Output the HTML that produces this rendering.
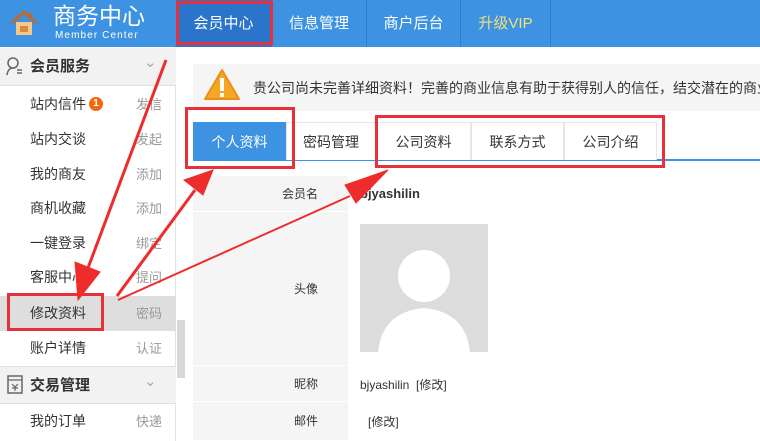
<!DOCTYPE html><html><head><meta charset="utf-8"><style>
*{margin:0;padding:0;box-sizing:border-box}
body{width:760px;height:441px;overflow:hidden;background:#fff;font-family:"Liberation Sans","Noto Sans CJK SC",sans-serif;font-size:13px;color:#333;position:relative}
.a{position:absolute}
.hdr{left:0;top:0;width:760px;height:47px;background:#3d93e2}
.nav{top:0;height:47px;line-height:47px;color:#fff;font-size:15px;text-align:center;border-right:1px solid #2f7ccc}
.side{left:0;top:47px;width:176px;height:394px;border-right:1px solid #e3e3e3}
.sh{left:0;width:176px;height:38px;background:#f2f2f2;border-bottom:1px solid #e0e0e0;font-weight:bold;font-size:15px;line-height:38px;padding-left:30px;color:#333}
.it{left:0;width:176px;height:35px;line-height:35px;font-size:14px;padding-left:30px;color:#333}
.it span{position:absolute;left:136px;color:#999;font-size:13px}
.tab{top:122px;height:38px;line-height:38px;text-align:center;font-size:14px;border:1px solid #e6e6e6;border-bottom:none;background:#fff}
.lb{left:193px;width:155px;background:#f5f5f5;text-align:right;padding-right:30px;font-size:12px;border-bottom:1px solid #fff}
</style></head><body>
<div class="a hdr"></div>
<svg class="a" style="left:10px;top:9px" width="28" height="28" viewBox="0 0 28 28"><path d="M2 14 L14 3 L26 14" stroke="#c0692a" stroke-width="3" fill="none"/><rect x="19" y="4" width="3" height="6" fill="#c0692a"/><rect x="6" y="13" width="16" height="13" fill="#f3c88a"/><rect x="10" y="17" width="8" height="6" fill="#d8893e"/></svg>
<div class="a" style="left:53px;top:2px;color:#fff;font-size:23px;line-height:28px">商务中心</div>
<div class="a" style="left:55px;top:30px;color:#fff;font-size:10px;letter-spacing:1.1px">Member Center</div>
<div class="a nav" style="left:176px;width:96px;background:#2a74cc">会员中心</div>
<div class="a nav" style="left:272px;width:95px">信息管理</div>
<div class="a nav" style="left:367px;width:94px">商户后台</div>
<div class="a nav" style="left:461px;width:90px;color:#f2e07a">升级VIP</div>
<div class="a" style="left:176px;top:1px;width:97px;height:44px;border:3px solid #e8303a"></div>

<div class="a side"></div>
<div class="a sh" style="top:48px">会员服务<span class="a" style="left:144px;top:-4px;color:#aaa;font-weight:normal">⌄</span></div>
<svg class="a" style="left:6px;top:57px" width="18" height="20"><circle cx="7" cy="6" r="5" stroke="#666" stroke-width="1.5" fill="none"/><path d="M1 18 Q2 11 7 11" stroke="#666" stroke-width="1.5" fill="none"/><path d="M11 13h5M11 16h5" stroke="#666" stroke-width="1.5"/></svg>
<div class="a it" style="top:87px">站内信件<span>发信</span></div>
<div class="a" style="left:89px;top:97px;width:14px;height:14px;border-radius:7px;background:#f26a10;color:#fff;font-size:10px;line-height:14px;text-align:center;font-weight:bold">1</div>
<div class="a it" style="top:122px">站内交谈<span>发起</span></div>
<div class="a it" style="top:157px">我的商友<span>添加</span></div>
<div class="a it" style="top:191px">商机收藏<span>添加</span></div>
<div class="a it" style="top:226px">一键登录<span>绑定</span></div>
<div class="a it" style="top:260px">客服中心<span>提问</span></div>
<div class="a it" style="top:296px;background:#dedede">修改资料<span>密码</span></div>
<div class="a" style="left:7px;top:293px;width:97px;height:38px;border:3px solid #e8303a"></div>
<div class="a it" style="top:331px">账户详情<span>认证</span></div>
<div class="a sh" style="top:366px;border-top:1px solid #e0e0e0">交易管理<span class="a" style="left:144px;top:-4px;color:#aaa;font-weight:normal">⌄</span></div>
<svg class="a" style="left:7px;top:375px" width="16" height="20"><rect x="1" y="1" width="14" height="17" stroke="#666" stroke-width="1.5" fill="none"/><path d="M1 5h14M5 9l3 3 3-3M8 12v4M5 13h6" stroke="#666" stroke-width="1.2" fill="none"/></svg>
<div class="a it" style="top:404px">我的订单<span>快递</span></div>
<div class="a" style="left:177px;top:320px;width:8px;height:58px;background:#d8d8d8"></div>

<div class="a" style="left:193px;top:64px;width:567px;height:47px;background:#f5f5f5"></div>
<svg class="a" style="left:203px;top:68px" width="38" height="34"><path d="M19 2 L36 31 L2 31 Z" fill="#f5a623" stroke="#e8901a" stroke-width="2" stroke-linejoin="round"/><rect x="17" y="10" width="4" height="13" fill="#fff"/><rect x="17" y="25" width="4" height="4" fill="#fff"/></svg>
<div class="a" style="left:253px;top:78px;width:507px;overflow:hidden;font-size:14px;white-space:nowrap">贵公司尚未完善详细资料！完善的商业信息有助于获得别人的信任，结交潜在的商业伙伴</div>

<div class="a" style="left:193px;top:159px;width:567px;height:2px;background:#3d93e2"></div>
<div class="a tab" style="left:193px;width:93px;background:#3d93e2;color:#fff;border-color:#3d93e2">个人资料</div>
<div class="a tab" style="left:286px;width:90px">密码管理</div>
<div class="a tab" style="left:376px;width:95px">公司资料</div>
<div class="a tab" style="left:471px;width:93px">联系方式</div>
<div class="a tab" style="left:564px;width:93px">公司介绍</div>
<div class="a" style="left:185px;top:107px;width:110px;height:62px;border:3px solid #e8303a"></div>
<div class="a" style="left:375px;top:115px;width:290px;height:53px;border:3px solid #e8303a"></div>

<div class="a lb" style="top:176px;height:36px;line-height:36px">会员名</div>
<div class="a lb" style="top:212px;height:154px;line-height:154px">头像</div>
<div class="a lb" style="top:366px;height:36px;line-height:36px">昵称</div>
<div class="a lb" style="top:402px;height:39px;line-height:39px">邮件</div>
<div class="a" style="left:360px;top:186px;font-weight:bold;font-size:13px">bjyashilin</div>
<div class="a" style="left:360px;top:224px;width:128px;height:128px;background:#dcdcdc;overflow:hidden"><svg width="128" height="128"><circle cx="64" cy="52" r="26" fill="#fff"/><path d="M18 128 Q22 88 64 84 Q106 88 110 128Z" fill="#fff"/></svg></div>
<div class="a" style="left:360px;top:376px;font-size:12px">bjyashilin &nbsp;[修改]</div>
<div class="a" style="left:368px;top:413px;font-size:12px">[修改]</div>

<svg class="a" style="left:0;top:0" width="760" height="441">
<g stroke="#ee2c2c" fill="#ee2c2c">
<path d="M166 60 L88 268" stroke-width="3"/><path d="M78 300 L75 262 L100 272Z"/>
<path d="M117 296 L195 190" stroke-width="3"/><path d="M213 170 L184 180 L203 195Z"/>
<path d="M118 300 L350 196" stroke-width="2"/><path d="M388 170 L345 185 L356 203Z"/>
</g></svg>
</body></html>
